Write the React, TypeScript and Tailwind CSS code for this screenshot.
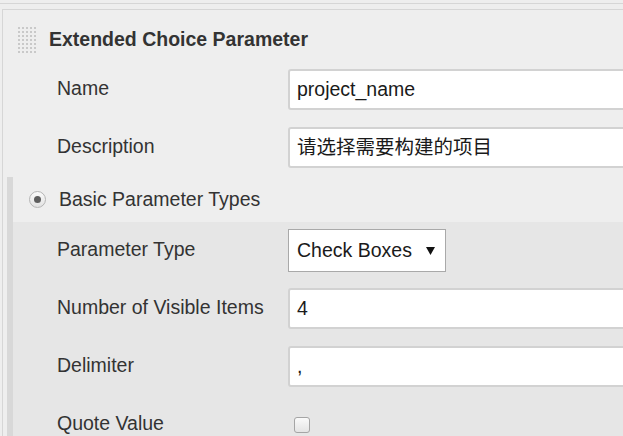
import React from "react";

const font = { fontFamily: '"Liberation Sans", Arial, "Noto Sans CJK SC", sans-serif' };

function Grip() {
  const dots = [];
  for (let r = 0; r < 7; r++) {
    for (let c = 0; c < 5; c++) {
      dots.push(<rect key={`${r}-${c}`} x={c * 4} y={r * 4} width={2} height={2} fill="#c9c9c9" />);
    }
  }
  return (
    <svg width="18" height="26" viewBox="0 0 18 26" className="shrink-0">
      {dots}
    </svg>
  );
}

function Field({ label, value }: { label: string; value: string }) {
  return (
    <div className="flex items-center h-[41px]">
      <div className="w-[231px] shrink-0 text-[#333] -mt-[2px]">{label}</div>
      <div className="w-[360px] shrink-0 h-[41px] flex items-center px-[7px] bg-white border-2 border-[#d2d2d2] rounded-[3px] text-[#1a1a1a]">
        {value}
      </div>
    </div>
  );
}

export default function App() {
  return (
    <div className="w-[623px] h-[436px] overflow-hidden bg-[#eeeeee] text-[19.5px] leading-none" style={font}>
      <div className="h-[3px]" />
      <div className="h-px bg-[#d6d6d6]" />
      <div className="h-[5px]" />
      <div className="ml-[2px] h-full border-t border-l border-[#d6d6d6]">
        <div className="flex items-center pt-[17px] pl-[15px]">
          <Grip />
          <div className="ml-[13px] font-bold text-[#333]">Extended Choice Parameter</div>
        </div>

        <div className="pl-[54px] mt-[16px] flex flex-col gap-[17px]">
          <Field label="Name" value="project_name" />
          <Field label="Description" value="请选择需要构建的项目" />
        </div>

        <div className="mt-[9px] ml-[4px] border-l-[6px] border-[#d8d8d8] h-full">
          <div className="h-[45px] flex items-center pl-[16px]">
            <div className="w-[17px] h-[17px] rounded-full border border-[#b5b5b5] bg-gradient-to-b from-[#fbfbfb] to-[#e2e2e2] flex items-center justify-center">
              <div className="w-[7px] h-[7px] rounded-full bg-[#5e5e5e]" />
            </div>
            <div className="ml-[13px] text-[#333]">Basic Parameter Types</div>
          </div>

          <div className="bg-[#e6e6e6] h-full pt-[7px] pl-[44px] flex flex-col">
            <div className="flex items-center h-[43px]">
              <div className="w-[231px] shrink-0 text-[#333] -mt-[2px]">Parameter Type</div>
              <div className="w-[158px] h-[43px] flex items-center justify-between pl-[8px] pr-[10px] bg-white border border-[#a9a9a9] text-[#1a1a1a]">
                <span>Check Boxes</span>
                <svg width="9" height="8" viewBox="0 0 9 8">
                  <path d="M0 0 H9 L4.5 8 Z" fill="#111" />
                </svg>
              </div>
            </div>
            <div className="mt-[16px] flex flex-col gap-[17px]">
              <Field label="Number of Visible Items" value="4" />
              <Field label="Delimiter" value="," />
              <div className="flex items-center h-[41px]">
                <div className="w-[237px] shrink-0 text-[#333] -mt-[2px]">Quote Value</div>
                <div className="w-[16px] h-[16px] rounded-[3px] border border-[#a5a5a5] bg-gradient-to-b from-[#fafafa] to-[#e4e4e4]" />
              </div>
            </div>
          </div>
        </div>
      </div>
    </div>
  );
}
